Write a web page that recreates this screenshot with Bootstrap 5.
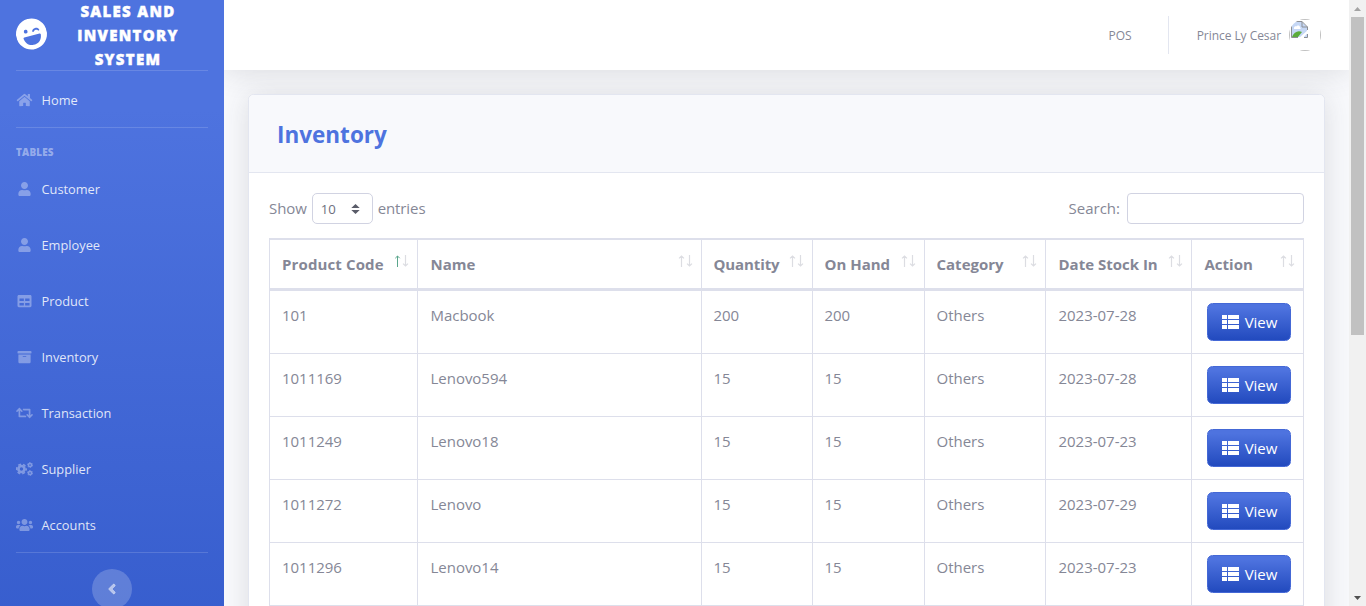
<!DOCTYPE html>
<html lang="en">
<head>
<meta charset="utf-8">
<meta name="viewport" content="width=device-width, initial-scale=1">
<title>Sales and Inventory System</title>
<link href="https://cdn.jsdelivr.net/npm/bootstrap@5.3.0/dist/css/bootstrap.min.css" rel="stylesheet">
<style>
body{height:606px;overflow:hidden;font-family:"Open Sans","Noto Sans",sans-serif;font-size:15px;line-height:24px;color:#858796;background:#f8f9fc}
svg{display:block;flex:none}
.shell{height:606px}
.sidebar{width:224px;height:1090px;flex:none;background:linear-gradient(180deg,#4e73df 10%,#224abe 100%);padding:0 16px;color:#fff}
.brand{height:70px}
.brand svg{transform:rotate(-15deg);margin-bottom:2px}
.brand-text{width:128px;margin-left:17px;font-size:15px;font-weight:800;letter-spacing:1.3px;text-transform:uppercase;text-align:center;-webkit-text-stroke:.4px #fff}
.rule{height:1px;background:rgba(255,255,255,.15)}
.side-link{height:56px;font-size:12.8px;color:rgba(255,255,255,.85);text-decoration:none}
.side-link.first{padding-top:2px}
.side-link svg{width:17px;height:14px;margin-right:8.5px;fill:rgba(255,255,255,.34);overflow:visible}
.side-heading{font-size:9.9px;font-weight:800;color:rgba(255,255,255,.43);line-height:16px;padding-top:16px;height:33px;letter-spacing:.2px}
.rule.last{margin-top:-1px}
.toggle{width:40px;height:40px;margin:16px auto 0;background:rgba(255,255,255,.2)}
.soft{box-shadow:0 2.4px 28px 0 rgba(58,59,69,.15)}
.topbar{height:70px;background:#fff;font-size:12px;padding-right:28px}
.topbar .pos,.topbar .who{padding-top:2px}
.topbar .split{width:1px;height:38px;background:#e3e6f0;margin:0 28px 0 36px}
.topbar .who{letter-spacing:-.05px}
.avatar{width:32px;height:32px;margin-left:8px}
.avatar>div{width:32px;height:32px;border:1px solid #c0c0c0;padding:1px}
.panel{margin:24px 24px 0;border:1px solid #e3e6f0;border-radius:5.6px;background:#fff;height:1000px}
.panel-head{height:78px;background:#f8f9fc;border-bottom:1px solid #e3e6f0;padding:2px 28px 0;border-radius:5px 5px 0 0}
.panel-head h4{font-size:22.5px;color:#4e73df}
.panel-body{padding:20px}
.controls{height:31px;margin-bottom:14px}
.controls span{position:relative;padding-bottom:2px}
.len{width:61px;height:31px;border:1px solid #d1d3e2;border-radius:5px;margin:0 5px 0 5px;padding:1px 12px 0 8px;font-size:13.2px;color:#6e707e}
.find{width:177px;height:31px;border:1px solid #d1d3e2;border-radius:4px;margin-left:7px;padding:4px 8px;outline:0}
.len+span,.len-label{letter-spacing:-.1px}
.grid{table-layout:fixed;width:1035px;border-collapse:separate;border-spacing:0;border-left:1px solid #dddfeb}
.grid th,.grid td{border-right:1px solid #dddfeb;border-bottom:1px solid #dddfeb;padding:12px 12px 0 12px;vertical-align:top;white-space:nowrap}
.grid th:nth-child(2),.grid td:nth-child(2),.grid th:nth-child(6),.grid td:nth-child(6),.grid th:nth-child(7){padding-left:12.5px}
.grid th:nth-child(3),.grid th:nth-child(4),.grid td:nth-child(3),.grid td:nth-child(4),.grid th:nth-child(5),.grid td:nth-child(5){padding-left:11.5px}
.grid td{letter-spacing:-.02px}
.grid th:nth-child(3){letter-spacing:-.1px}
.grid th:first-child{letter-spacing:.12px}
.grid th{border-top:2px solid #dddfeb;border-bottom-width:3px;height:53px;position:relative;line-height:24px}
.grid td{height:63px}
.grid td:last-child{padding-left:15px}
.grid th svg{position:absolute;right:7px;top:15px}
.view{width:84px;height:38px;border:1px solid #4468d6;border-radius:5.6px;background:linear-gradient(180deg,#4e73df 10%,#224abe 100%);color:#fff;font-size:15px;padding:0 0 1px 1px}
.view svg{margin-right:6px}
.bar{width:17px;flex:none;background:#f1f1f1;padding:7px 0 6px}
.bar .thumb{width:13px;height:318px;background:#c1c1c1;margin-top:6px}
</style>
</head>
<body>
<svg width="0" height="0" class="position-absolute">
<symbol id="home" viewBox="0 0 576 512"><path d="M280.37 148.26L96 300.11V464a16 16 0 0 0 16 16l112.06-.29a16 16 0 0 0 15.92-16V368a16 16 0 0 1 16-16h64a16 16 0 0 1 16 16v95.64a16 16 0 0 0 16 16.05L464 480a16 16 0 0 0 16-16V300L295.67 148.26a12.19 12.19 0 0 0-15.3 0zM571.6 251.47L488 182.56V44.05a12 12 0 0 0-12-12h-56a12 12 0 0 0-12 12v72.61L318.47 43a48 48 0 0 0-61 0L4.34 251.47a12 12 0 0 0-1.6 16.9l25.5 31A12 12 0 0 0 45.15 301l235.22-193.74a12.19 12.19 0 0 1 15.3 0L530.9 301a12 12 0 0 0 16.9-1.6l25.5-31a12 12 0 0 0-1.7-16.93z"/></symbol>
<symbol id="user" viewBox="0 0 448 512"><path d="M224 256c70.7 0 128-57.3 128-128S294.7 0 224 0 96 57.3 96 128s57.3 128 128 128zm89.6 32h-16.7c-22.2 10.2-46.9 16-72.9 16s-50.6-5.8-72.9-16h-16.7C60.2 288 0 348.2 0 422.4V464c0 26.5 21.5 48 48 48h352c26.5 0 48-21.5 48-48v-41.6c0-74.2-60.2-134.4-134.4-134.4z"/></symbol>
<symbol id="tbl" viewBox="0 0 512 512"><path d="M464 32H48C21.490 32 0 53.490 0 80v352c0 26.510 21.490 48 48 48h416c26.510 0 48-21.490 48-48V80c0-26.510-21.490-48-48-48zM232 416H72v-88h160v88zm0-160H72v-88h160v88zm208 160H280v-88h160v88zm0-160H280v-88h160v88z"/></symbol>
<symbol id="archive" viewBox="0 0 512 512"><path d="M32 448c0 17.7 14.3 32 32 32h384c17.7 0 32-14.3 32-32V160H32v288zm160-212c0-6.6 5.4-12 12-12h104c6.6 0 12 5.4 12 12v8c0 6.6-5.4 12-12 12H204c-6.6 0-12-5.4-12-12v-8zM480 32H32C14.3 32 0 46.3 0 64v48c0 8.8 7.2 16 16 16h480c8.8 0 16-7.2 16-16V64c0-17.7-14.3-32-32-32z"/></symbol>
<symbol id="retweet" viewBox="0 0 640 512"><path d="M629.657 343.598L528.971 444.284c-9.373 9.372-24.568 9.372-33.941 0L394.343 343.598c-9.373-9.373-9.373-24.569 0-33.941l10.823-10.823c9.562-9.562 25.133-9.34 34.419.492L480 342.118V160H292.451a24.005 24.005 0 0 1-16.971-7.029l-16-16C244.361 121.851 255.069 96 276.451 96H520c13.255 0 24 10.745 24 24v222.118l40.416-42.792c9.285-9.831 24.856-10.054 34.419-.492l10.823 10.823c9.372 9.372 9.372 24.569-.001 33.941zm-265.138 15.431A23.999 23.999 0 0 0 347.548 352H160V169.881l40.416 42.792c9.286 9.831 24.856 10.054 34.419.491l10.822-10.822c9.373-9.373 9.373-24.569 0-33.941L144.971 67.716c-9.373-9.373-24.569-9.373-33.941 0L10.343 168.402c-9.373 9.373-9.373 24.569 0 33.941l10.822 10.822c9.562 9.562 25.133 9.34 34.419-.491L96 169.881V392c0 13.255 10.745 24 24 24h243.549c21.382 0 32.09-25.851 16.971-40.971l-16.001-16z"/></symbol>
<symbol id="cogs" viewBox="0 0 640 512"><g fill="none" stroke="#fff" opacity=".34"><circle cx="205" cy="256" r="114" stroke-width="100"/><circle cx="205" cy="256" r="180" stroke-width="60" stroke-dasharray="110 78.5" stroke-dashoffset="55"/><circle cx="528" cy="106" r="60" stroke-width="56"/><circle cx="528" cy="106" r="94" stroke-width="34" stroke-dasharray="58 40.4"/><circle cx="528" cy="406" r="60" stroke-width="56"/><circle cx="528" cy="406" r="94" stroke-width="34" stroke-dasharray="58 40.4"/></g></symbol>
<symbol id="users" viewBox="0 0 640 512"><path d="M96 224c35.3 0 64-28.7 64-64s-28.7-64-64-64-64 28.7-64 64 28.7 64 64 64zm448 0c35.3 0 64-28.7 64-64s-28.7-64-64-64-64 28.7-64 64 28.7 64 64 64zm32 32h-64c-17.6 0-33.5 7.1-45.1 18.6 40.3 22.1 68.9 62 75.1 109.4h66c17.7 0 32-14.3 32-32v-32c0-35.3-28.7-64-64-64zm-256 0c61.9 0 112-50.1 112-112S381.9 32 320 32 208 82.1 208 144s50.1 112 112 112zm76.8 32h-8.3c-20.8 10-43.9 16-68.5 16s-47.6-6-68.5-16h-8.3C179.6 288 128 339.6 128 403.2V432c0 26.5 21.5 48 48 48h288c26.5 0 48-21.5 48-48v-28.8c0-63.6-51.6-115.2-115.2-115.2zm-223.7-13.4C161.5 263.1 145.6 256 128 256H64c-35.3 0-64 28.7-64 64v32c0 17.7 14.3 32 32 32h65.9c6.3-47.4 34.9-87.3 75.2-109.4z"/></symbol>
<symbol id="list" viewBox="0 0 17 14"><path fill="#fff" d="M0 0h5v4H0zM6 0h11v4H6zM0 5h5v4H0zM6 5h11v4H6zM0 10h5v4H0zM6 10h11v4H6z"/></symbol>
<symbol id="sort" viewBox="0 0 16 12"><path fill="none" stroke="#dcdde2" stroke-width="1.2" d="M3.500 12V1M1 3.400L3.500 1 6 3.400M11.500 0v11M9 8.600l2.500 2.400L14 8.600"/></symbol>
<symbol id="sorted" viewBox="0 0 16 12"><path fill="none" stroke="#5aa68c" d="M3.500 12V1M1.300 3.200L3.500 1 5.700 3.200"/><path fill="none" stroke="#dcdde2" stroke-width="1.2" d="M11.500 0v11M9 8.600l2.500 2.400L14 8.600"/></symbol>
</svg>
<div class="shell d-flex overflow-hidden">
  <nav class="sidebar">
    <div class="brand d-flex align-items-center">
      <svg width="31" height="32" viewBox="0 0 496 512"><path fill="#fff" fill-rule="evenodd" d="M248 8C111 8 0 119 0 256s111 248 248 248 248-111 248-248S385 8 248 8zM168 166a30 30 0 1 1 0 60a30 30 0 1 1 0-60zM390 300c-8 76-60 132-129 132h-26c-69 0-121-56-129-132-1-10 6-18 16-18h252c10 0 17 8 16 18zM270 217c4-25 32-41 58-41s54 16 58 41c2 11-11 19-20 11l-10-8c-14-13-42-13-56 0l-10 8c-9 8-22 0-20-11z"/></svg>
      <div class="brand-text">Sales and Inventory System</div>
    </div>
    <div class="rule"></div>
    <a class="side-link first d-flex align-items-center"><svg><use href="#home"/></svg>Home</a>
    <div class="rule"></div>
    <div class="side-heading">TABLES</div>
    <a class="side-link d-flex align-items-center"><svg><use href="#user"/></svg>Customer</a>
    <a class="side-link d-flex align-items-center"><svg><use href="#user"/></svg>Employee</a>
    <a class="side-link d-flex align-items-center"><svg><use href="#tbl"/></svg>Product</a>
    <a class="side-link d-flex align-items-center"><svg><use href="#archive"/></svg>Inventory</a>
    <a class="side-link d-flex align-items-center"><svg><use href="#retweet"/></svg>Transaction</a>
    <a class="side-link d-flex align-items-center"><svg><use href="#cogs"/></svg>Supplier</a>
    <a class="side-link d-flex align-items-center"><svg><use href="#users"/></svg>Accounts</a>
    <div class="rule last"></div>
    <div class="toggle rounded-circle d-flex align-items-center justify-content-center"><svg width="8" height="16" viewBox="0 0 256 512"><path fill="#fff" fill-opacity=".55" stroke="#fff" stroke-opacity=".5" stroke-width="24" d="M31.7 239l136-136c9.4-9.4 24.6-9.4 33.9 0l22.6 22.6c9.4 9.4 9.4 24.6 0 33.9L127.900 256l96.400 96.400c9.400 9.400 9.400 24.600 0 33.900L201.700 409c-9.400 9.400-24.600 9.400-33.900 0l-136-136c-9.500-9.400-9.500-24.600-.1-34z"/></svg></div>
  </nav>
  <main class="flex-grow-1 overflow-hidden">
    <div class="topbar soft d-flex align-items-center justify-content-end">
      <span class="pos">POS</span><div class="split"></div><span class="who">Prince Ly Cesar</span>
      <div class="avatar rounded-circle overflow-hidden"><div><svg width="17" height="17" viewBox="0 0 17 17"><path fill="#c5d7f5" d="M1 1h10l5 5v10H1z"/><path fill="#fff" d="M3 7c0-2 2-2 2.500-1.500C6 4 9 4 9 6.500 10 6.500 10 8 9 8H3z"/><path fill="#5bac3a" d="M1 16c2-5 6-7 10-5l-4 5z"/><path fill="#fff" d="M8 17l9-8v2.500l-5 5.500z"/><path fill="none" stroke="#8c8f94" d="M.5 16.500V.5H11l5.500 5.500v3M11 .5V6h5.500M.5 16.500H7M13 16.500h3.500V13"/></svg></div></div>
    </div>
    <div class="panel soft">
      <div class="panel-head d-flex align-items-center"><h4 class="m-0 fw-bold">Inventory</h4></div>
      <div class="panel-body">
        <div class="controls d-flex justify-content-between align-items-center">
          <div class="d-flex align-items-center"><span class="len-label">Show</span><div class="len d-flex align-items-center justify-content-between">10<svg width="9" height="10" viewBox="0 0 9 10"><path fill="#5a5c69" d="M.3 4L4.500 0l4.200 4zM.3 6h8.400L4.500 10z"/></svg></div><span>entries</span></div>
          <div class="d-flex align-items-center"><span>Search:</span><input class="find" aria-label="Search"></div>
        </div>
        <table class="grid">
          <colgroup><col style="width:148px"><col style="width:284px"><col style="width:111px"><col style="width:112px"><col style="width:121px"><col style="width:146px"><col style="width:112px"></colgroup>
          <thead><tr><th>Product Code<svg width="16" height="12"><use href="#sorted"/></svg></th><th>Name<svg width="16" height="12"><use href="#sort"/></svg></th><th>Quantity<svg width="16" height="12"><use href="#sort"/></svg></th><th>On Hand<svg width="16" height="12"><use href="#sort"/></svg></th><th>Category<svg width="16" height="12"><use href="#sort"/></svg></th><th>Date Stock In<svg width="16" height="12"><use href="#sort"/></svg></th><th>Action<svg width="16" height="12"><use href="#sort"/></svg></th></tr></thead>
          <tbody>
            <tr><td>101</td><td>Macbook</td><td>200</td><td>200</td><td>Others</td><td>2023-07-28</td><td><a class="view d-flex align-items-center justify-content-center text-decoration-none"><svg width="17" height="14"><use href="#list"/></svg>View</a></td></tr>
            <tr><td>1011169</td><td>Lenovo594</td><td>15</td><td>15</td><td>Others</td><td>2023-07-28</td><td><a class="view d-flex align-items-center justify-content-center text-decoration-none"><svg width="17" height="14"><use href="#list"/></svg>View</a></td></tr>
            <tr><td>1011249</td><td>Lenovo18</td><td>15</td><td>15</td><td>Others</td><td>2023-07-23</td><td><a class="view d-flex align-items-center justify-content-center text-decoration-none"><svg width="17" height="14"><use href="#list"/></svg>View</a></td></tr>
            <tr><td>1011272</td><td>Lenovo</td><td>15</td><td>15</td><td>Others</td><td>2023-07-29</td><td><a class="view d-flex align-items-center justify-content-center text-decoration-none"><svg width="17" height="14"><use href="#list"/></svg>View</a></td></tr>
            <tr><td>1011296</td><td>Lenovo14</td><td>15</td><td>15</td><td>Others</td><td>2023-07-23</td><td><a class="view d-flex align-items-center justify-content-center text-decoration-none"><svg width="17" height="14"><use href="#list"/></svg>View</a></td></tr>
          </tbody>
        </table>
      </div>
    </div>
  </main>
  <div class="bar d-flex flex-column align-items-center">
    <svg width="7" height="4" viewBox="0 0 7 4"><path fill="#a3a3a3" d="M0 4L3.500 0 7 4z"/></svg>
    <div class="thumb"></div>
    <svg class="mt-auto" width="7" height="4" viewBox="0 0 7 4"><path fill="#505050" d="M0 0h7L3.500 4z"/></svg>
  </div>
</div>
<script src="https://cdn.jsdelivr.net/npm/bootstrap@5.3.0/dist/js/bootstrap.bundle.min.js"></script>
</body>
</html>
